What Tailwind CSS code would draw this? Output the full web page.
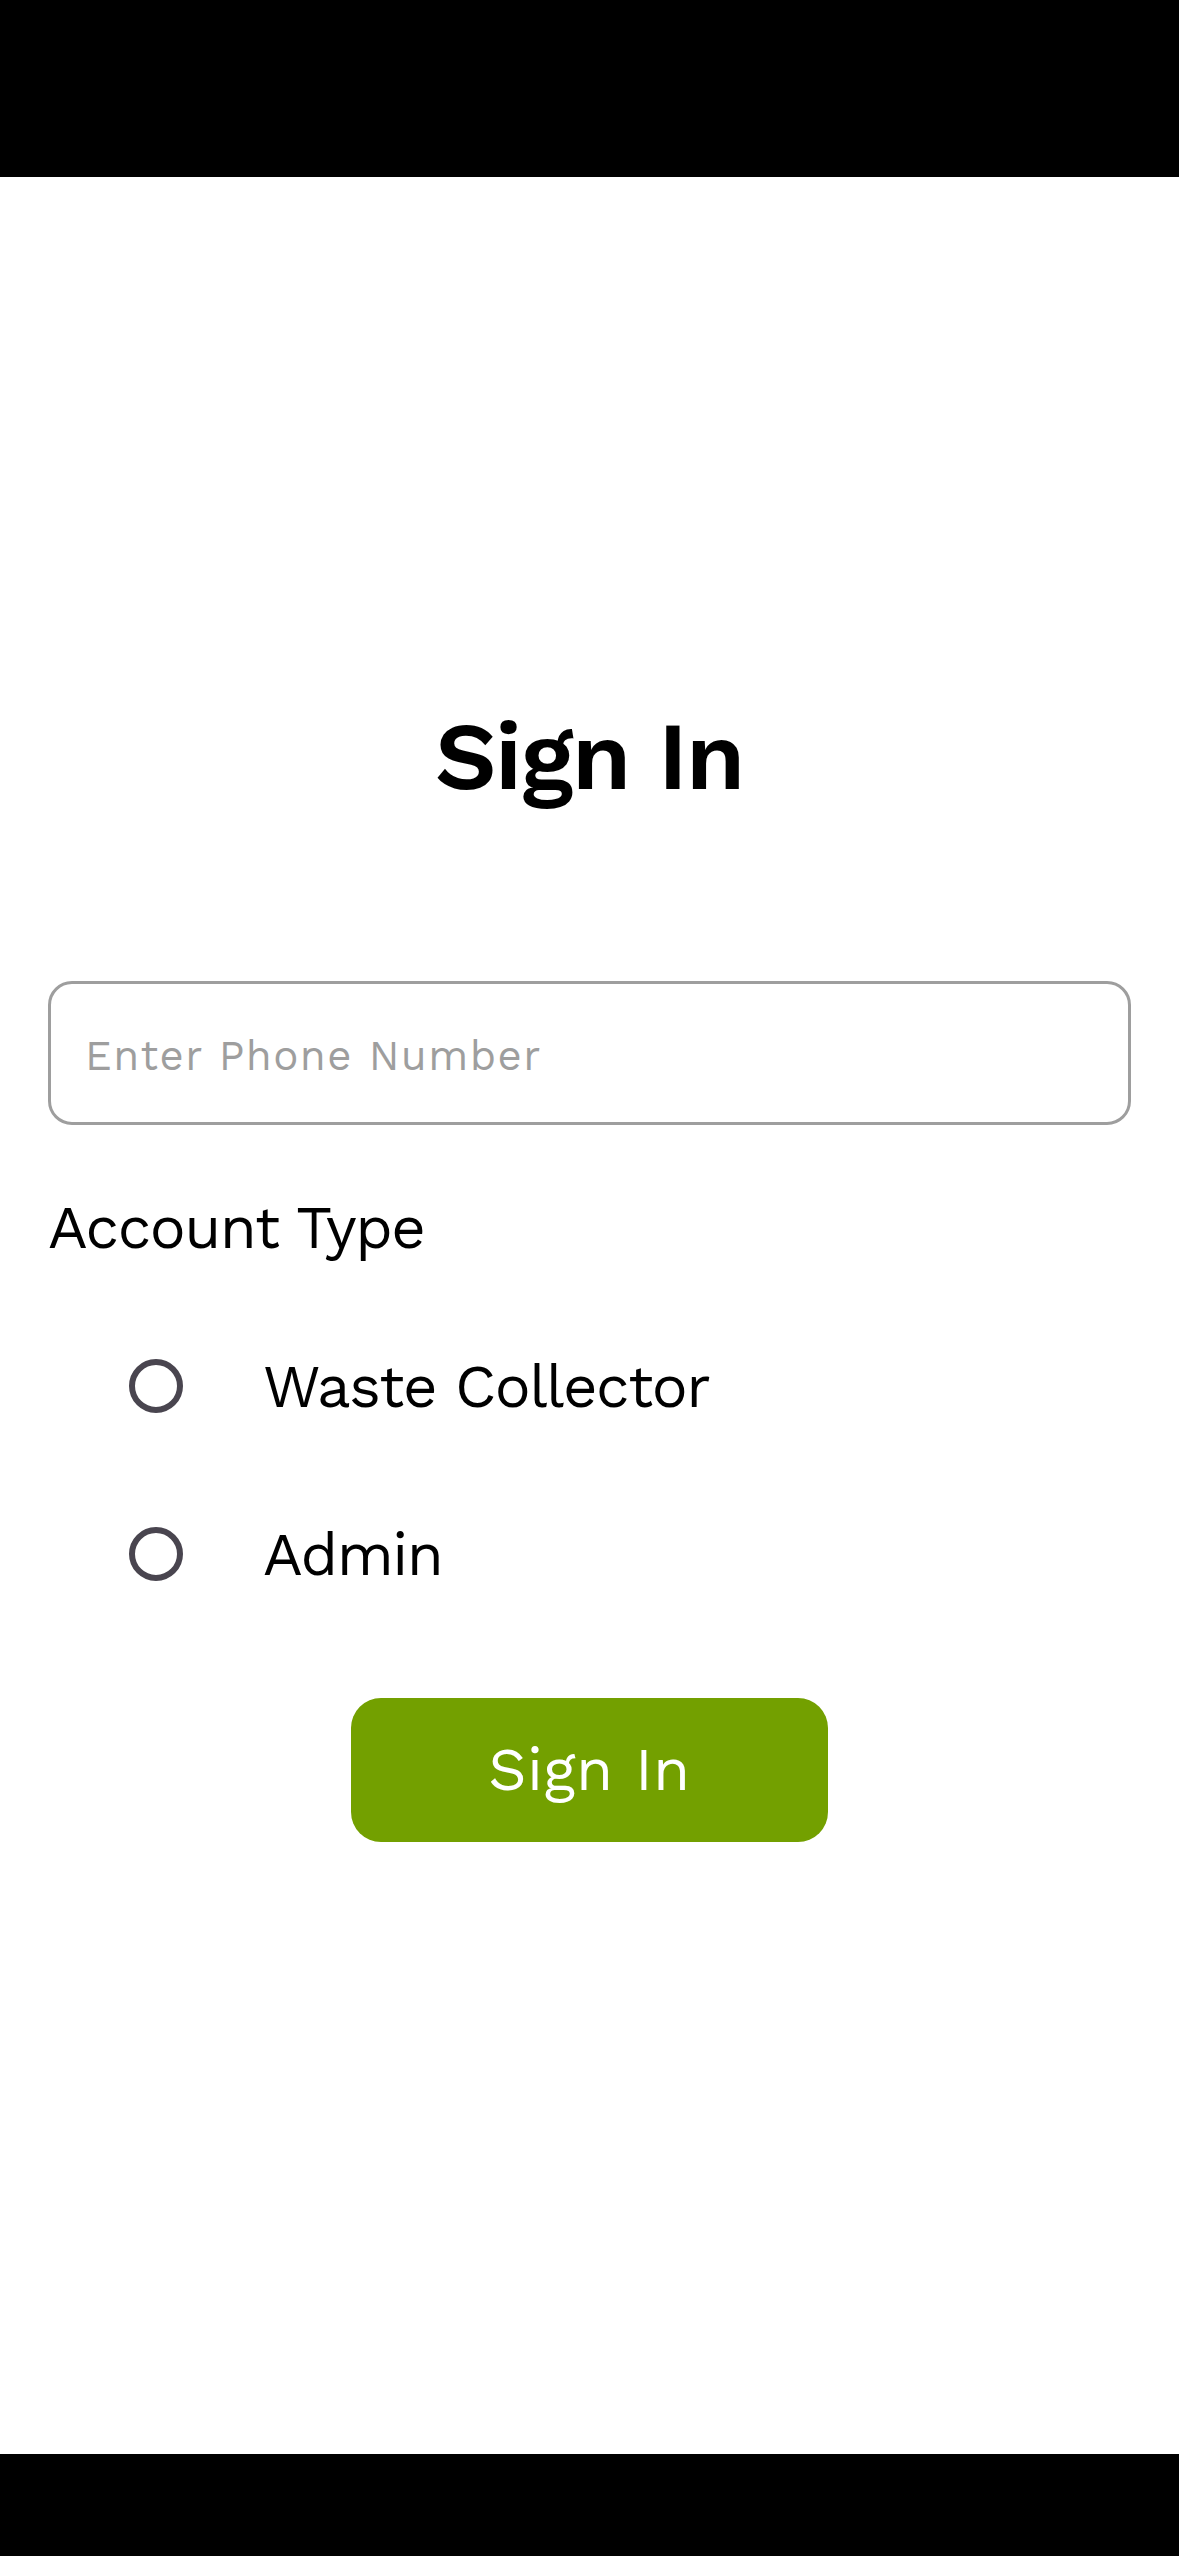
<!DOCTYPE html>
<html lang="en">
<head>
<meta charset="utf-8">
<meta name="viewport" content="width=device-width, initial-scale=1">
<title>Sign In</title>
<script src="https://cdn.jsdelivr.net/npm/@tailwindcss/browser@4"></script>
</head>
<body class="flex min-h-screen flex-col bg-white font-['Work_Sans','Open_Sans',sans-serif] text-black">
<header class="h-[177px] shrink-0 bg-black"></header>
<main class="flex-1 px-12 pt-[523px]">
  <h1 class="text-center text-[96px] leading-[112px] font-semibold tracking-[-0.015em]">Sign In</h1>
  <form class="mt-[169px] flex flex-col">
    <input type="tel" aria-label="Phone number" placeholder="Enter Phone Number" class="h-36 w-full rounded-3xl border-3 border-[#9e9e9e] bg-white px-[34px] pt-1 text-[42px] tracking-[0.035em] placeholder:text-[#9e9e9e]">
    <fieldset class="mt-[67px]">
      <legend class="text-[60px] leading-[72px] tracking-tight">Account Type</legend>
      <div class="mt-[38px]">
        <label class="flex h-42 items-center gap-20 pl-[81px] text-[60px] leading-[72px] tracking-tight">
          <input type="radio" name="account" value="collector" class="size-[54px] appearance-none rounded-full border-6 border-[#49454f] checked:bg-[#73a000]">
          <span class="pt-0.5">Waste Collector</span>
        </label>
        <label class="flex h-42 items-center gap-20 pl-[81px] text-[60px] leading-[72px] tracking-tight">
          <input type="radio" name="account" value="admin" class="size-[54px] appearance-none rounded-full border-6 border-[#49454f] checked:bg-[#73a000]">
          <span class="pt-0.5">Admin</span>
        </label>
      </div>
    </fieldset>
    <button type="submit" class="mt-15 h-36 w-[477px] self-center rounded-[30px] bg-[#73a000] text-[60px] leading-[72px] tracking-[0.01em] text-white">Sign In</button>
  </form>
</main>
<footer class="h-[102px] shrink-0 bg-black"></footer>
</body>
</html>
